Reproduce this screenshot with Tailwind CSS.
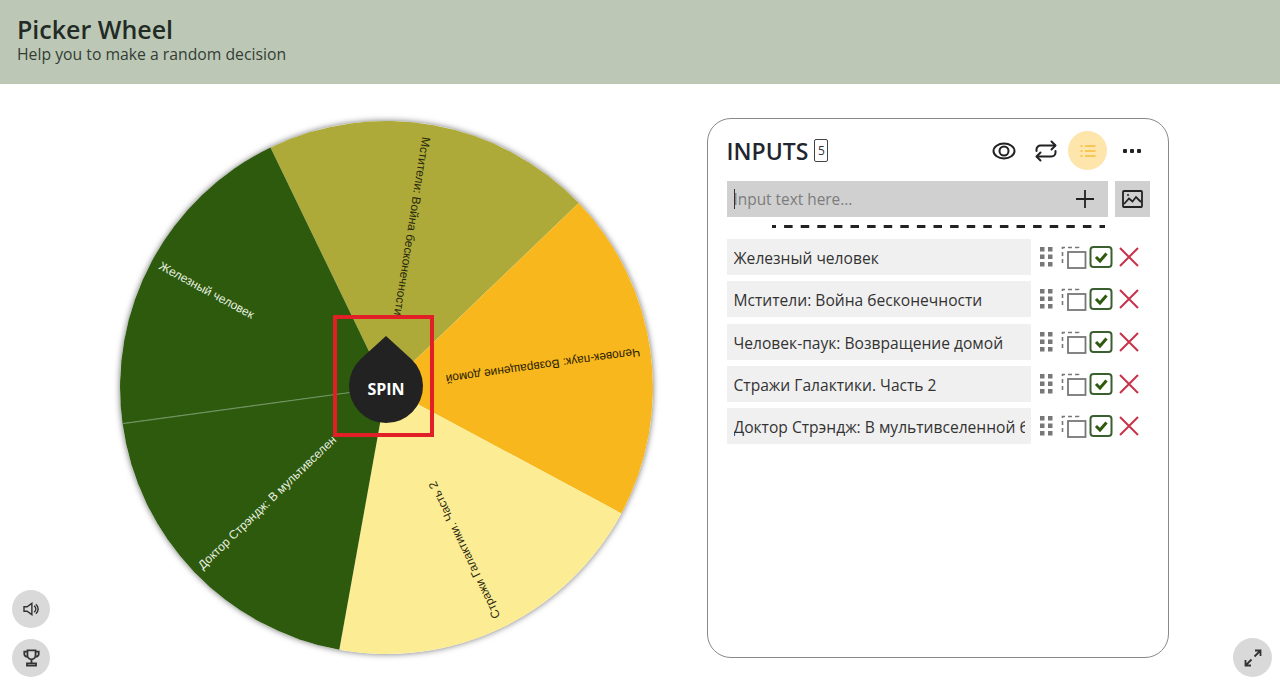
<!DOCTYPE html>
<html lang="ru">
<head>
<meta charset="utf-8">
<title>Picker Wheel</title>
<script src="https://cdn.jsdelivr.net/npm/@tailwindcss/browser@4"></script>
</head>
<body class="relative h-[688px] w-[1280px] overflow-hidden bg-white font-['Open_Sans',sans-serif] text-[#222]">
<header class="h-[84px] bg-[#bcc8b5] pl-[17px] pt-[14px]">
  <h1 class="text-[25px] leading-[31px] font-semibold text-[#222b25]">Picker Wheel</h1>
  <p class="text-[15.750px] leading-[18px] text-[#333d36]">Help you to make a random decision</p>
</header>
<main class="flex items-start">
  <div class="relative ml-[108px] mt-[23px] h-[560px] w-[560px] shrink-0">
    <svg width="560" height="560" viewBox="0 0 560 560" class="block">
      <g transform="translate(278.5 280.5)">
        <circle r="266.5" fill="#fff" class="drop-shadow-[0_0_3px_rgba(0,0,0,0.55)]"/>
        <path d="M0 0L-116 -240A266.500 266.500 0 0 1 192.300 -184.400Z" fill="#aeaa3a"/>
        <path d="M0 0L192.300 -184.400A266.500 266.500 0 0 1 234.900 125.900Z" fill="#f8b71c"/>
        <path d="M0 0L234.900 125.900A266.500 266.500 0 0 1 -47.200 262.300Z" fill="#fcec94"/>
        <path d="M0 0L-47.200 262.300A266.500 266.500 0 0 1 -264 36.100Z" fill="#2d5a0c"/>
        <path d="M0 0L-264 36.100A266.500 266.500 0 0 1 -116 -240Z" fill="#2d5a0c"/>
        <line x1="0" y1="0" x2="-264" y2="36.100" stroke="#6f9160" stroke-width="1.200"/>
        <g class="font-['Liberation_Sans',sans-serif] text-[12px]" dominant-baseline="central">
          <text transform="rotate(99) translate(-253.500 0)" fill="#26280a">Мстители: Война бесконечности</text>
          <text transform="rotate(172) translate(-256 0)" fill="#2b2103">Человек-паук: Возвращение домой</text>
          <text transform="rotate(244.400) translate(-255.500 0)" fill="#2e2c10">Стражи Галактики. Часть 2</text>
          <text transform="rotate(316.100) translate(-259 0)" fill="#e8f0e0">Доктор Стрэндж: В мультивселен</text>
          <text transform="rotate(28.400) translate(-257.500 0)" fill="#e8f0e0">Железный человек</text>
        </g>
        <path d="M-.5 -51.500L-26 -28.300A37 37 0 1 0 25 -28.300Z" fill="#222"/>
        <text x="-.5" y="7" text-anchor="middle" fill="#fff" class="text-[16px] font-bold">SPIN</text>
      </g>
    </svg>
    <div class="absolute left-[225px] top-[208px] h-[122px] w-[101px] border-[4px] border-[#e21f26]"></div>
  </div>

  <section class="ml-[39px] mt-[34px] h-[540px] w-[462px] shrink-0 rounded-[24px] border-[1.500px] border-[#888] px-[18.500px] pt-[11.500px]">
    <div class="flex h-[40px] items-center">
      <h2 class="mt-px text-[23px] font-semibold leading-none text-[#1f2630]">INPUTS</h2>
      <span class="ml-[6px] flex h-[23px] w-[14px] items-center justify-center rounded-[2px] border border-[#444] text-[12px] leading-none text-[#333]">5</span>
      <svg class="ml-[163.500px]" width="24" height="20" viewBox="0 0 24 20" fill="none" stroke="#222" stroke-width="2"><ellipse cx="12" cy="10" rx="10.500" ry="7.500"/><circle cx="12" cy="10" r="4.500"/></svg>
      <svg class="ml-[18px]" width="24" height="22" viewBox="0 0 24 22" fill="none" stroke="#222" stroke-width="2" stroke-linecap="round" stroke-linejoin="round"><path d="M2.500 11V9.500A4 4 0 0 1 6.500 5.500H21"/><path d="M17.500 1.500L21.500 5.500L17.500 9.500"/><path d="M21.500 11V12.500A4 4 0 0 1 17.500 16.500H3"/><path d="M6.500 12.500L2.500 16.500L6.500 20.500"/></svg>
      <div class="ml-[10.500px] flex h-[39px] w-[39px] items-center justify-center rounded-full bg-[#fde5ab]">
        <svg width="16" height="14" viewBox="0 0 16 14" fill="none" stroke="#f5bd3a" stroke-width="1.500"><path d="M5 2H15.500M5 7H15.500M5 12H15.500M.5 2H2.500M.5 7H2.500M.5 12H2.500"/></svg>
      </div>
      <svg class="ml-[14.500px]" width="20" height="6" viewBox="0 0 20 6" fill="#222"><rect x="1" y="1" width="4" height="4" rx="1"/><rect x="8" y="1" width="4" height="4" rx="1"/><rect x="15" y="1" width="4" height="4" rx="1"/></svg>
    </div>
    <div class="mt-[10px] flex gap-[7px]">
      <div class="relative flex h-[36px] w-[381px] items-center bg-[#d0d0d0] pl-[7px] pr-[13px]">
        <span class="absolute left-[7px] top-[8px] h-[20px] w-px bg-[#333]"></span>
        <input class="min-w-0 flex-1 bg-transparent pt-[2px] text-[15.400px] outline-none placeholder:text-[#7c7c7c]" placeholder="Input text here...">
        <svg width="20" height="20" viewBox="0 0 20 20" stroke="#222" stroke-width="1.800"><path d="M10 1V19M1 10H19"/></svg>
      </div>
      <div class="flex h-[36px] w-[35px] items-center justify-center bg-[#d0d0d0]">
        <svg width="21" height="18" viewBox="0 0 21 18" fill="none" stroke="#222" stroke-width="1.800"><rect x="1" y="1" width="19" height="16" rx="1"/><path d="M2 14L7 8.500L10.500 11.500L14 7L19 12"/><circle cx="6" cy="5" r="1" fill="#222" stroke="none"/></svg>
      </div>
    </div>
    <svg class="ml-[45px] mt-[8px] block" width="333" height="3" viewBox="0 0 333 3"><line x1="0" y1="1.500" x2="333" y2="1.500" stroke="#222" stroke-width="3" stroke-dasharray="8.500 8.100" stroke-dashoffset="4.500"/></svg>
    <ul class="mt-[11.500px] flex flex-col gap-[6.300px]">
      <li class="flex h-[36px] items-center">
        <div class="h-[36px] w-[304px] bg-[#f0f0f0] pl-[7px] pr-[6px]"><p class="overflow-hidden whitespace-nowrap text-[15.600px] leading-[38px] text-[#333]">Железный человек</p></div>
        <svg class="ml-[9px]" width="100" height="24" viewBox="0 0 100 24"><path fill="#777" d="M0 2h4.500v4.500H0zM8 2h4.500v4.500H8zM0 9.500h4.500V14H0zM8 9.500h4.500V14H8zM0 17h4.500v4.500H0zM8 17h4.500v4.500H8z"/><path fill="none" stroke="#777" stroke-width="1.600" stroke-dasharray="4 3" d="M22.500 18V2.500H38.500V5"/><rect x="28" y="7" width="17.500" height="16" fill="none" stroke="#777" stroke-width="1.800"/><rect x="50.500" y="2" width="21" height="20" rx="3" fill="none" stroke="#3a6030" stroke-width="2"/><path d="M56 12L60 16L66.500 8.500" fill="none" stroke="#2d5a0c" stroke-width="3"/><path d="M80 3L98 21M98 3L80 21" stroke="#c8324a" stroke-width="2"/></svg>
      </li>
      <li class="flex h-[36px] items-center">
        <div class="h-[36px] w-[304px] bg-[#f0f0f0] pl-[7px] pr-[6px]"><p class="overflow-hidden whitespace-nowrap text-[15.600px] leading-[38px] text-[#333]">Мстители: Война бесконечности</p></div>
        <svg class="ml-[9px]" width="100" height="24" viewBox="0 0 100 24"><path fill="#777" d="M0 2h4.500v4.500H0zM8 2h4.500v4.500H8zM0 9.500h4.500V14H0zM8 9.500h4.500V14H8zM0 17h4.500v4.500H0zM8 17h4.500v4.500H8z"/><path fill="none" stroke="#777" stroke-width="1.600" stroke-dasharray="4 3" d="M22.500 18V2.500H38.500V5"/><rect x="28" y="7" width="17.500" height="16" fill="none" stroke="#777" stroke-width="1.800"/><rect x="50.500" y="2" width="21" height="20" rx="3" fill="none" stroke="#3a6030" stroke-width="2"/><path d="M56 12L60 16L66.500 8.500" fill="none" stroke="#2d5a0c" stroke-width="3"/><path d="M80 3L98 21M98 3L80 21" stroke="#c8324a" stroke-width="2"/></svg>
      </li>
      <li class="flex h-[36px] items-center">
        <div class="h-[36px] w-[304px] bg-[#f0f0f0] pl-[7px] pr-[6px]"><p class="overflow-hidden whitespace-nowrap text-[15.600px] leading-[38px] text-[#333]">Человек-паук: Возвращение домой</p></div>
        <svg class="ml-[9px]" width="100" height="24" viewBox="0 0 100 24"><path fill="#777" d="M0 2h4.500v4.500H0zM8 2h4.500v4.500H8zM0 9.500h4.500V14H0zM8 9.500h4.500V14H8zM0 17h4.500v4.500H0zM8 17h4.500v4.500H8z"/><path fill="none" stroke="#777" stroke-width="1.600" stroke-dasharray="4 3" d="M22.500 18V2.500H38.500V5"/><rect x="28" y="7" width="17.500" height="16" fill="none" stroke="#777" stroke-width="1.800"/><rect x="50.500" y="2" width="21" height="20" rx="3" fill="none" stroke="#3a6030" stroke-width="2"/><path d="M56 12L60 16L66.500 8.500" fill="none" stroke="#2d5a0c" stroke-width="3"/><path d="M80 3L98 21M98 3L80 21" stroke="#c8324a" stroke-width="2"/></svg>
      </li>
      <li class="flex h-[36px] items-center">
        <div class="h-[36px] w-[304px] bg-[#f0f0f0] pl-[7px] pr-[6px]"><p class="overflow-hidden whitespace-nowrap text-[15.600px] leading-[38px] text-[#333]">Стражи Галактики. Часть 2</p></div>
        <svg class="ml-[9px]" width="100" height="24" viewBox="0 0 100 24"><path fill="#777" d="M0 2h4.500v4.500H0zM8 2h4.500v4.500H8zM0 9.500h4.500V14H0zM8 9.500h4.500V14H8zM0 17h4.500v4.500H0zM8 17h4.500v4.500H8z"/><path fill="none" stroke="#777" stroke-width="1.600" stroke-dasharray="4 3" d="M22.500 18V2.500H38.500V5"/><rect x="28" y="7" width="17.500" height="16" fill="none" stroke="#777" stroke-width="1.800"/><rect x="50.500" y="2" width="21" height="20" rx="3" fill="none" stroke="#3a6030" stroke-width="2"/><path d="M56 12L60 16L66.500 8.500" fill="none" stroke="#2d5a0c" stroke-width="3"/><path d="M80 3L98 21M98 3L80 21" stroke="#c8324a" stroke-width="2"/></svg>
      </li>
      <li class="flex h-[36px] items-center">
        <div class="h-[36px] w-[304px] bg-[#f0f0f0] pl-[7px] pr-[6px]"><p class="overflow-hidden whitespace-nowrap text-[15.600px] leading-[38px] text-[#333]">Доктор Стрэндж: В мультивселенной безумия</p></div>
        <svg class="ml-[9px]" width="100" height="24" viewBox="0 0 100 24"><path fill="#777" d="M0 2h4.500v4.500H0zM8 2h4.500v4.500H8zM0 9.500h4.500V14H0zM8 9.500h4.500V14H8zM0 17h4.500v4.500H0zM8 17h4.500v4.500H8z"/><path fill="none" stroke="#777" stroke-width="1.600" stroke-dasharray="4 3" d="M22.500 18V2.500H38.500V5"/><rect x="28" y="7" width="17.500" height="16" fill="none" stroke="#777" stroke-width="1.800"/><rect x="50.500" y="2" width="21" height="20" rx="3" fill="none" stroke="#3a6030" stroke-width="2"/><path d="M56 12L60 16L66.500 8.500" fill="none" stroke="#2d5a0c" stroke-width="3"/><path d="M80 3L98 21M98 3L80 21" stroke="#c8324a" stroke-width="2"/></svg>
      </li>
    </ul>
  </section>
</main>

<button class="absolute left-[12px] top-[590px] flex h-[38px] w-[38px] items-center justify-center rounded-full bg-[#d9d9d9]">
  <svg width="16" height="14" viewBox="0 0 18 16" fill="none" stroke="#333" stroke-width="1.600"><path d="M1 5.500H4.500L10 1.500V14.500L4.500 10.500H1Z"/><path d="M12.500 4.500A4 4 0 0 1 12.500 11.500M14.500 2.500A7 7 0 0 1 14.500 13.500"/></svg>
</button>
<button class="absolute left-[12px] top-[639px] flex h-[38px] w-[38px] items-center justify-center rounded-full bg-[#d9d9d9]">
  <svg width="17" height="18" viewBox="0 0 18 20" fill="none" stroke="#333" stroke-width="2"><path d="M4.500 1.500H13.500V7A4.500 4.500 0 0 1 4.500 7Z"/><path d="M4.500 3H1V5.500A3 3 0 0 0 4.500 8.500M13.500 3H17V5.500A3 3 0 0 1 13.500 8.500M9 11.500V15M4 18.500V16H14V18.500Z"/></svg>
</button>
<button class="absolute left-[1233px] top-[638px] flex h-[39px] w-[39px] items-center justify-center rounded-full bg-[#d9d9d9]">
  <svg width="18" height="18" viewBox="0 0 18 18" fill="none" stroke="#333" stroke-width="1.800"><path d="M10.500 7.500L16.500 1.500M11 1.500H16.500V7M7.500 10.500L1.500 16.500M1.500 11V16.500H7"/></svg>
</button>
</body>
</html>
